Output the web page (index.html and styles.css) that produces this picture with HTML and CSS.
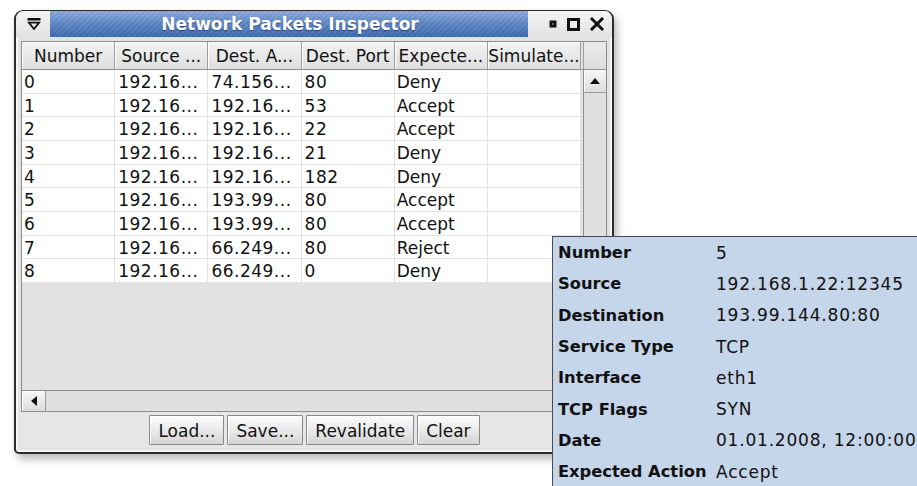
FILE: index.html
```html
<!DOCTYPE html>
<html lang="en">
<head>
<meta charset="utf-8">
<title>Network Packets Inspector</title>
<link rel="stylesheet" href="styles.css">
</head>
<body>
<div class="desk">
  <div class="window">
    <div class="titlebar">
      <div class="tb-menu">
        <svg width="14" height="12" viewBox="0 0 14 12">
          <rect x="0.5" y="0" width="13" height="2.5" fill="#111"/>
          <path d="M1.8 4.6 H12.2 L7 11 Z" fill="none" stroke="#111" stroke-width="1.8" stroke-linejoin="miter"/>
        </svg>
      </div>
      <div class="tb-title">Network Packets Inspector</div>
      <div class="tb-controls">
        <svg width="8" height="8" viewBox="0 0 8 8"><rect x="0.5" y="0.5" width="7" height="7" fill="#111"/><rect x="3" y="3" width="2" height="2" fill="#666"/></svg>
        <svg width="13" height="13" viewBox="0 0 13 13"><rect x="1.5" y="1.5" width="10" height="10" fill="none" stroke="#111" stroke-width="3"/></svg>
        <svg width="14" height="14" viewBox="0 0 14 14"><path d="M2 2 L12 12 M12 2 L2 12" stroke="#111" stroke-width="3" stroke-linecap="square"/></svg>
      </div>
    </div>
    <div class="client">
      <div class="pane">
        <div class="thead">
          <div class="th">Number</div>
          <div class="th">Source ...</div>
          <div class="th">Dest. A...</div>
          <div class="th">Dest. Port</div>
          <div class="th">Expecte...</div>
          <div class="th">Simulate...</div>
        </div>
        <div class="corner-top"></div>
        <div class="tbody">
          <div class="tr"><div class="td">0</div><div class="td num">192.16...</div><div class="td num">74.156...</div><div class="td num">80</div><div class="td">Deny</div><div class="td"></div></div>
          <div class="tr"><div class="td">1</div><div class="td num">192.16...</div><div class="td num">192.16...</div><div class="td num">53</div><div class="td">Accept</div><div class="td"></div></div>
          <div class="tr"><div class="td">2</div><div class="td num">192.16...</div><div class="td num">192.16...</div><div class="td num">22</div><div class="td">Accept</div><div class="td"></div></div>
          <div class="tr"><div class="td">3</div><div class="td num">192.16...</div><div class="td num">192.16...</div><div class="td num">21</div><div class="td">Deny</div><div class="td"></div></div>
          <div class="tr"><div class="td">4</div><div class="td num">192.16...</div><div class="td num">192.16...</div><div class="td num">182</div><div class="td">Deny</div><div class="td"></div></div>
          <div class="tr"><div class="td">5</div><div class="td num">192.16...</div><div class="td num">193.99...</div><div class="td num">80</div><div class="td">Accept</div><div class="td"></div></div>
          <div class="tr"><div class="td">6</div><div class="td num">192.16...</div><div class="td num">193.99...</div><div class="td num">80</div><div class="td">Accept</div><div class="td"></div></div>
          <div class="tr"><div class="td">7</div><div class="td num">192.16...</div><div class="td num">66.249...</div><div class="td num">80</div><div class="td">Reject</div><div class="td"></div></div>
          <div class="tr"><div class="td">8</div><div class="td num">192.16...</div><div class="td num">66.249...</div><div class="td num">0</div><div class="td">Deny</div><div class="td"></div></div>
        </div>
        <div class="vscroll">
          <div class="sbtn">
            <svg width="10" height="6" viewBox="0 0 10 6"><path d="M0 6 L5 0 L10 6 Z" fill="#111"/></svg>
          </div>
          <div class="strack"></div>
          <div class="sbtn">
            <svg width="10" height="6" viewBox="0 0 10 6"><path d="M0 0 L5 6 L10 0 Z" fill="#111"/></svg>
          </div>
        </div>
        <div class="hscroll">
          <div class="sbtn">
            <svg width="6" height="10" viewBox="0 0 6 10"><path d="M6 0 L0 5 L6 10 Z" fill="#111"/></svg>
          </div>
          <div class="strack"></div>
        </div>
        <div class="corner-bottom"></div>
      </div>
      <div class="buttons">
        <button class="btn">Load...</button>
        <button class="btn">Save...</button>
        <button class="btn">Revalidate</button>
        <button class="btn">Clear</button>
      </div>
    </div>
  </div>

  <div class="tooltip">
    <div class="tip-label">Number</div><div class="tip-value">5</div>
    <div class="tip-label">Source</div><div class="tip-value">192.168.1.22:12345</div>
    <div class="tip-label">Destination</div><div class="tip-value">193.99.144.80:80</div>
    <div class="tip-label">Service Type</div><div class="tip-value">TCP</div>
    <div class="tip-label">Interface</div><div class="tip-value">eth1</div>
    <div class="tip-label">TCP Flags</div><div class="tip-value">SYN</div>
    <div class="tip-label">Date</div><div class="tip-value">01.01.2008, 12:00:00</div>
    <div class="tip-label">Expected Action</div><div class="tip-value">Accept</div>
  </div>
</div>
</body>
</html>
```

FILE: styles.css
```css
* { box-sizing: border-box; }

html, body {
  margin: 0;
  padding: 0;
  background: #ffffff;
}

body {
  font-family: "DejaVu Sans", "Liberation Sans", sans-serif;
  font-size: 17px;
  color: #111;
}

.desk {
  position: relative;
  width: 917px;
  height: 486px;
  overflow: hidden;
  padding: 10px 0 0 14px;
}

/* ---------- window frame ---------- */
.window {
  width: 600px;
  height: 444px;
  border: 2px solid #2c2c2c;
  border-top-width: 1px;
  border-radius: 9px 9px 5px 5px;
  background: #e3e3e3;
  box-shadow: inset 0 0 0 2px #f6f6f6, 3px 5px 9px rgba(0, 0, 0, 0.28);
  display: flex;
  flex-direction: column;
  overflow: hidden;
}

.titlebar {
  height: 26px;
  display: flex;
  flex: none;
}

.tb-menu {
  width: 34px;
  background: linear-gradient(#f4f4f4, #e2e2e2);
  border-top-left-radius: 8px;
  display: flex;
  align-items: center;
  justify-content: center;
  padding-left: 2px;
}

.tb-title {
  flex: 1;
  background:
    repeating-linear-gradient(135deg, rgba(255,255,255,0.05) 0 2px, rgba(0,0,0,0.03) 2px 4px),
    linear-gradient(#8aaadb, #5f88c6 45%, #3c69ae);
  color: #fff;
  font-weight: bold;
  font-size: 17px;
  text-align: center;
  line-height: 27px;
  text-shadow: 0 1px 1px rgba(0, 0, 40, 0.45);
  padding-left: 2px;
}

.tb-controls {
  width: 84px;
  background: linear-gradient(#f4f4f4, #e2e2e2);
  border-top-right-radius: 8px;
  display: flex;
  align-items: center;
  justify-content: flex-end;
  gap: 10px;
  padding-right: 8px;
}

.client {
  flex: 1;
  padding: 4px 5px 4px 5px;
  display: flex;
  flex-direction: column;
}

/* ---------- scroll pane with table ---------- */
.pane {
  height: 371px;
  border: 1px solid #8c8c8c;
  background: #e2e2e2;
  display: grid;
  grid-template-columns: 561px 1fr;
  grid-template-rows: 28px 1fr 21px;
}

.thead {
  grid-column: 1;
  grid-row: 1;
  display: grid;
  grid-template-columns: repeat(6, 93.2px);
  border-bottom: 1px solid #8e8e8e;
}

.th {
  background: linear-gradient(#f3f3f3, #dedede);
  border-right: 1px solid #9e9e9e;
  box-shadow: inset 1px 1px 0 #ffffff;
  text-align: center;
  line-height: 27px;
  padding-top: 1px;
  white-space: nowrap;
  overflow: hidden;
}

.corner-top {
  grid-column: 2;
  grid-row: 1;
  border-left: 1px solid #9e9e9e;
  border-bottom: 1px solid #8e8e8e;
  background: linear-gradient(#ececec, #dcdcdc);
}

.tbody {
  grid-column: 1;
  grid-row: 2;
  display: flex;
  flex-direction: column;
  align-items: flex-start;
}

.tr {
  display: grid;
  grid-template-columns: repeat(6, 93.2px);
  height: 23.67px;
  background: #ffffff;
}

.td {
  border-right: 1px solid #e2e2e2;
  border-bottom: 1px solid #e2e2e2;
  padding-left: 2px;
  padding-top: 1px;
  line-height: 22.67px;
  white-space: nowrap;
  overflow: hidden;
}

.td.num { letter-spacing: 0.5px; padding-left: 3px; }

/* ---------- scrollbars ---------- */
.vscroll {
  grid-column: 2;
  grid-row: 2;
  display: flex;
  flex-direction: column;
  border-left: 1px solid #8e8e8e;
  background: #e0e0e0;
}

.vscroll .sbtn {
  height: 23px;
  border-bottom: 1px solid #9a9a9a;
}

.vscroll .sbtn:last-child {
  border-bottom: none;
  border-top: 1px solid #9a9a9a;
}

.sbtn {
  flex: none;
  display: flex;
  align-items: center;
  justify-content: center;
  background: linear-gradient(#f7f7f7, #dcdcdc);
  box-shadow: inset 1px 1px 0 #ffffff;
}

.strack {
  flex: 1;
  background: #e0e0e0;
}

.hscroll {
  grid-column: 1;
  grid-row: 3;
  display: flex;
  border-top: 1px solid #8e8e8e;
  background: #e0e0e0;
}

.hscroll .sbtn {
  width: 24px;
  border-right: 1px solid #9a9a9a;
}

.corner-bottom {
  grid-column: 2;
  grid-row: 3;
  border-top: 1px solid #8e8e8e;
  border-left: 1px solid #8e8e8e;
  background: #e2e2e2;
}

/* ---------- buttons ---------- */
.buttons {
  display: flex;
  justify-content: center;
  gap: 3px;
  padding-top: 3px;
  padding-left: 1px;
  background: #e6e6e6;
  flex: 1;
}

.btn {
  height: 30px;
  padding: 1px 8px 0;
  border: 1px solid #8a8a8a;
  border-radius: 1px;
  background: linear-gradient(#fcfcfc, #e6e6e6 60%, #d4d4d4);
  box-shadow: inset 1px 1px 0 #ffffff;
  font-family: "DejaVu Sans", "Liberation Sans", sans-serif;
  font-size: 17px;
  color: #111;
}

/* ---------- hover tooltip ---------- */
.tooltip {
  position: absolute;
  left: 552px;
  top: 236px;
  width: 400px;
  height: 262px;
  border: 1px solid #4c4c4c;
  background: #c5d5ea;
  display: grid;
  grid-template-columns: 158px 1fr;
  grid-auto-rows: 31.3px;
  padding-left: 5px;
  align-items: center;
}

.tip-label {
  font-weight: bold;
  font-size: 16.3px;
  white-space: nowrap;
}

.tip-value {
  font-size: 17px;
  letter-spacing: 0.8px;
  white-space: nowrap;
}
```
